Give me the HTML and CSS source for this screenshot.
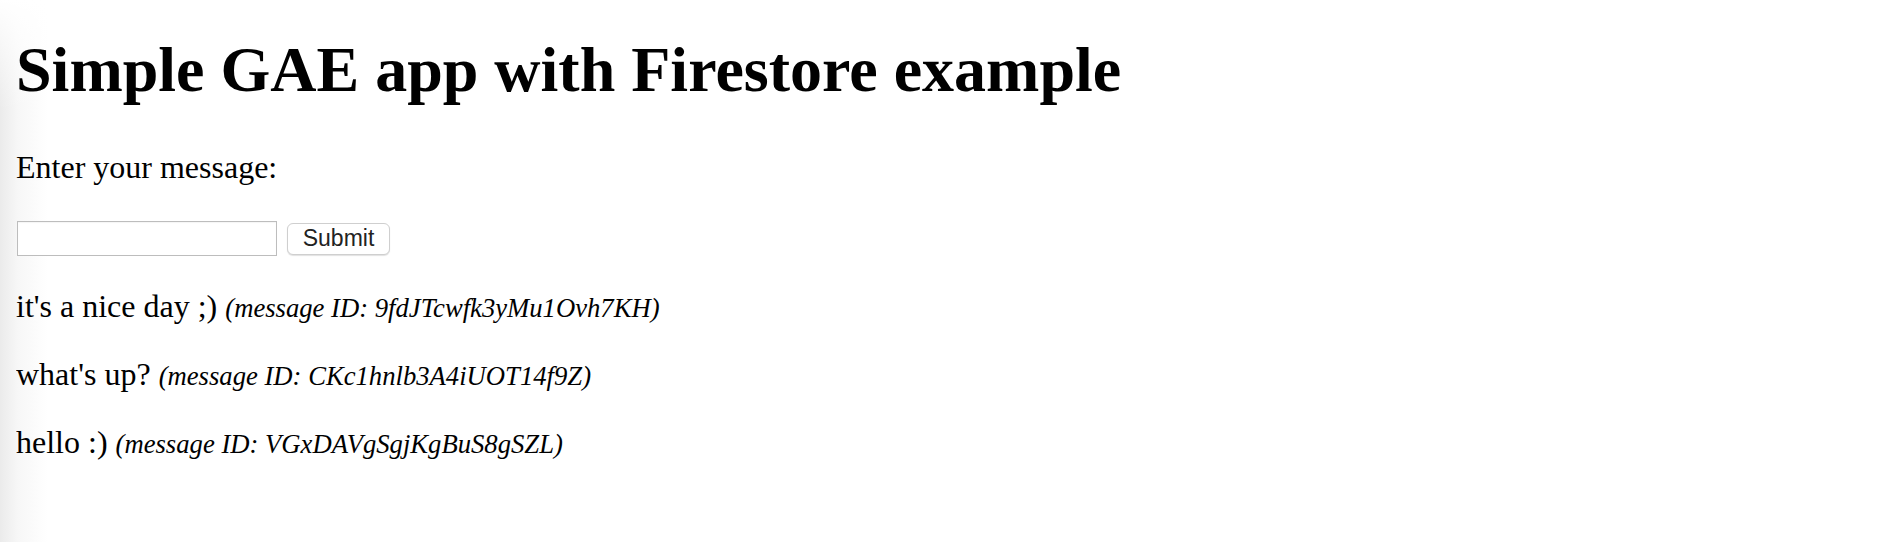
FILE: index.html
```html
<!DOCTYPE html>
<html lang="en">
<head>
<meta charset="utf-8">
<title>Simple GAE app with Firestore example</title>
<link rel="stylesheet" href="styles.css">
</head>
<body>
<h1 class="title">Simple GAE app with Firestore example</h1>
<form class="msg-form">
  <p class="prompt">Enter your message:</p>
  <div class="form-row">
    <input class="text-input" type="text" name="message">
    <button class="submit-btn" type="submit">Submit</button>
  </div>
</form>
<div class="messages">
  <p class="message">it's a nice day ;) <small class="msg-id">(message ID: 9fdJTcwfk3yMu1Ovh7KH)</small></p>
  <p class="message">what's up? <small class="msg-id">(message ID: CKc1hnlb3A4iUOT14f9Z)</small></p>
  <p class="message">hello :) <small class="msg-id">(message ID: VGxDAVgSgjKgBuS8gSZL)</small></p>
</div>
</body>
</html>
```

FILE: styles.css
```css
html {
  background:
    linear-gradient(to bottom, #ffffff 0, rgba(255,255,255,0) 110px),
    linear-gradient(to right, #ebebeb 0, #f7f7f7 18px, #ffffff 48px);
  background-color: #ffffff;
  min-height: 100%;
}

body {
  margin: 0 16px;
  padding-top: 1px;
  font-family: "Liberation Serif", "Times New Roman", serif;
  font-size: 32px;
  line-height: 1.15;
  color: #000;
}

.title {
  font-size: 64px;
  font-weight: bold;
  line-height: 1.15;
  margin: 32px 0 0;
}

.msg-form {
  margin: 0;
}

.prompt {
  margin: 42px 0 0;
}

.form-row {
  display: flex;
  align-items: center;
  gap: 10px;
  margin: 36px 0 0;
}

.text-input {
  box-sizing: border-box;
  width: 260px;
  height: 35px;
  margin: 0 0 0 1px;
  padding: 2px 6px;
  border: 1px solid #bdbdbd;
  border-radius: 0;
  background: #fff;
  box-shadow: inset 0 1px 1px rgba(0,0,0,0.04);
  font-family: "Liberation Sans", Arial, sans-serif;
  font-size: 23px;
}

.submit-btn {
  box-sizing: border-box;
  width: 103px;
  height: 32px;
  margin: 0;
  padding: 0 14px;
  border: 1px solid #cfcfcf;
  border-radius: 6px;
  background: #fff;
  box-shadow: 0 1px 1px rgba(0,0,0,0.12);
  font-family: "Liberation Sans", Arial, sans-serif;
  font-size: 23px;
  color: #222;
  line-height: 1;
}

.messages {
  margin-top: 32px;
}

.message {
  margin: 0 0 31px;
}

.msg-id {
  font-size: 26.67px;
  font-style: italic;
}
```
